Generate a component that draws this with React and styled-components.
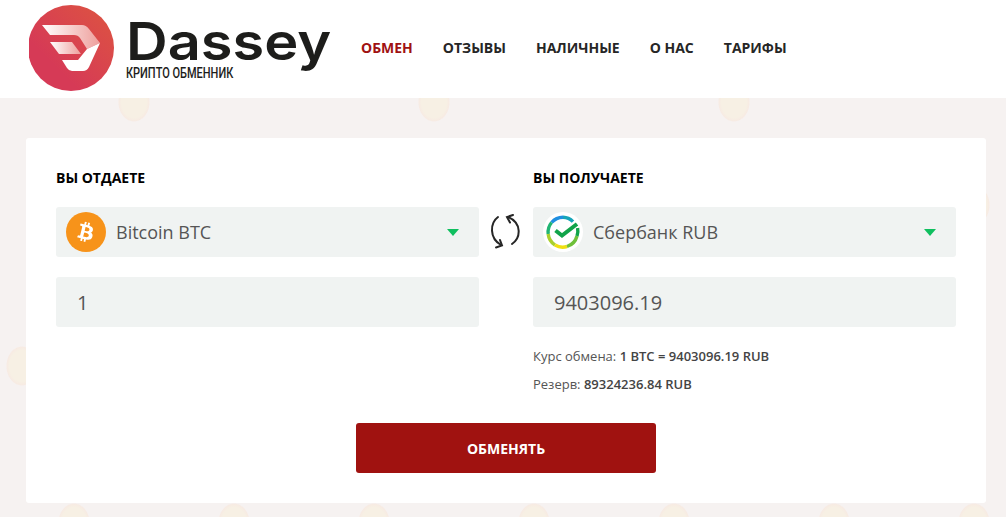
import React from 'react';
import styled, { createGlobalStyle } from 'styled-components';
import { FaBtc } from 'react-icons/fa';

const coin = (x, y) =>
  `radial-gradient(ellipse 16px 20px at ${x}px ${y}px, #f7f0e4 0, #f7f0e4 78%, #f7ebe3 94%, transparent 100%)`;

const coinLayers = [
  coin(134, 102),
  coin(22, 366),
  coin(74, 205),
  coin(74, 523),
  coin(234, 523),
].join(',');

const GlobalStyle = createGlobalStyle`
  html, body {
    margin: 0;
    padding: 0;
  }
  body {
    font-family: 'Open Sans', sans-serif;
    overflow: hidden;
  }
`;

const Page = styled.div`
  width: 1006px;
  height: 517px;
  overflow: hidden;
  background-color: #f6f2f1;
  background-image: ${coinLayers};
  background-size: 300px 600px;
  background-repeat: repeat-x;
`;

const Header = styled.header`
  height: 98px;
  background: #fff;
  display: flex;
  align-items: flex-start;
  padding-left: 29px;
  box-sizing: border-box;
`;

const Logo = styled.a`
  display: flex;
  align-items: flex-start;
  width: 332px;
  flex: none;
`;

const LogoMark = styled.svg`
  width: 86px;
  height: 86px;
  margin-top: 5px;
  flex: none;
`;

const LogoWords = styled.div`
  margin-left: 11px;
  display: flex;
  flex-direction: column;
`;

const LogoName = styled.span`
  font-family: Inter, sans-serif;
  font-size: 52px;
  font-weight: 600;
  line-height: 48px;
  margin-top: 18px;
  color: #1d1d1b;
  white-space: nowrap;
  transform-origin: left center;
  transform: scaleX(1.11);
`;

const LogoTag = styled.span`
  font-family: Roboto, sans-serif;
  font-size: 14px;
  font-weight: 500;
  line-height: 14px;
  color: #1d1d1b;
  white-space: nowrap;
  transform-origin: left center;
  transform: scaleX(0.785);
`;

const Nav = styled.nav`
  display: flex;
  gap: 30px;
  height: 95px;
  align-items: center;
`;

const NavLink = styled.a`
  font-size: 14px;
  font-weight: 700;
  color: ${p => (p.$active ? '#9f1212' : '#262626')};
`;

const Card = styled.main`
  margin: 40px 20px 0 26px;
  height: 365px;
  background: #fff;
  border-radius: 3px;
  padding: 32px 30px 0;
  box-sizing: border-box;
`;

const Columns = styled.div`
  display: grid;
  grid-template-columns: 423px 54px 423px;
`;

const Column = styled.div`
  display: flex;
  flex-direction: column;
`;

const Label = styled.div`
  font-size: 14px;
  font-weight: 700;
  line-height: 16px;
  color: #000;
  margin-bottom: 21px;
`;

const Select = styled.div`
  height: 50px;
  background: #f0f3f2;
  border-radius: 3px;
  display: flex;
  align-items: center;
  padding: 0 20px 0 10px;
  color: #555;
  font-size: 18px;
`;

const CoinBadge = styled.span`
  width: 40px;
  height: 40px;
  border-radius: 50%;
  background: ${p => p.$bg};
  display: flex;
  align-items: center;
  justify-content: center;
  margin-right: 10px;
  flex: none;
  color: #fff;
  font-size: 20px;
`;

const BtcGlyph = styled(FaBtc)`
  transform: rotate(14deg);
`;

const SelectText = styled.span`
  flex: 1;
`;

const Caret = styled.span`
  width: 0;
  height: 0;
  border-left: 6px solid transparent;
  border-right: 6px solid transparent;
  border-top: 7px solid #0fbf5f;
  margin-top: 1px;
`;

const Amount = styled.div`
  height: 50px;
  margin-top: 20px;
  background: #f0f3f2;
  border-radius: 3px;
  display: flex;
  align-items: center;
  padding: 0 21px;
  color: #555;
  font-size: 20px;
`;

const SwapCell = styled.div`
  height: 50px;
  margin-top: 37px;
  display: flex;
  align-items: center;
  justify-content: center;
`;

const Info = styled.div`
  font-size: 13px;
  line-height: 16px;
  color: #555;
  margin-top: ${p => p.$top}px;
`;

const Strong = styled.span`
  font-weight: 600;
  color: #444;
`;

const ButtonRow = styled.div`
  display: flex;
  justify-content: center;
`;

const Submit = styled.button`
  width: 300px;
  height: 50px;
  margin-top: 31px;
  border: none;
  border-radius: 3px;
  background: #a01210;
  color: #fff;
  font-family: 'Open Sans', sans-serif;
  font-size: 14px;
  font-weight: 700;
`;

const SberIcon = () => (
  <svg width="40" height="40" viewBox="0 0 40 40" fill="none">
    <g strokeWidth="3.4" strokeLinecap="butt">
      <path d="M30 9.6 A15 15 0 0 0 20 5.2" stroke="#16a5b8" />
      <path d="M20 5.2 A15 15 0 0 0 8.6 10.5" stroke="#1f8fe0" />
      <path d="M8.6 10.5 A15 15 0 0 0 5.2 22" stroke="#22b573" />
      <path d="M5.2 22 A15 15 0 0 0 12 33" stroke="#a9cf2e" />
      <path d="M12 33 A15 15 0 0 0 24 34.5" stroke="#f0e012" />
      <path d="M24 34.5 A15 15 0 0 0 34 24" stroke="#6fc03a" />
      <path d="M34 24 A15 15 0 0 0 34.6 16" stroke="#11a44a" />
    </g>
    <path d="M12.5 18.5 L19 23.5 L34 12" stroke="#11a44a" strokeWidth="4" />
  </svg>
);

const SwapIcon = () => (
  <svg width="32" height="36" viewBox="0 0 32 36" fill="none" stroke="#262626" strokeWidth="2" strokeLinecap="round">
    <path d="M8 3 C0 9 -1 24 11 31" />
    <path d="M6 33.5 L12 31.5 L10 26" />
    <path d="M22 30 C31 24 32 9 18 3" />
    <path d="M23 1 L17 3 L20 8.5" />
  </svg>
);

const LogoSvg = () => (
  <LogoMark viewBox="29 5 86 86">
    <defs>
      <linearGradient id="disc" x1="0" y1="1" x2="1" y2="0">
        <stop offset="0.3" stopColor="#d63a56" />
        <stop offset="1" stopColor="#dd5540" />
      </linearGradient>
      <linearGradient id="band" x1="0" y1="0" x2="1" y2="0">
        <stop offset="0" stopColor="#fff" />
        <stop offset="1" stopColor="#ee9f9c" />
      </linearGradient>
    </defs>
    <circle cx="71" cy="48" r="43" fill="url(#disc)" />
    <path d="M42 25 H82 Q86 25 89 29 L100 43 L87 49 L80 38 Q78 35 74 35 H50 Z" fill="url(#band)" />
    <path d="M50 42 H72 L81 54 H59 Z" fill="url(#band)" />
    <path d="M100 43 L89 67 Q87 71 83 71 H72 Q69 71 67 68 L62 60 H78 L87 49 Z" fill="#fff" />
  </LogoMark>
);

export default function App() {
  return (
    <Page>
      <GlobalStyle />
      <Header>
        <Logo>
          <LogoSvg />
          <LogoWords>
            <LogoName>Dassey</LogoName>
            <LogoTag>КРИПТО ОБМЕННИК</LogoTag>
          </LogoWords>
        </Logo>
        <Nav>
          <NavLink $active>ОБМЕН</NavLink>
          <NavLink>ОТЗЫВЫ</NavLink>
          <NavLink>НАЛИЧНЫЕ</NavLink>
          <NavLink>О НАС</NavLink>
          <NavLink>ТАРИФЫ</NavLink>
        </Nav>
      </Header>
      <Card>
        <Columns>
          <Column>
            <Label>ВЫ ОТДАЕТЕ</Label>
            <Select>
              <CoinBadge $bg="#f7931a"><BtcGlyph /></CoinBadge>
              <SelectText>Bitcoin BTC</SelectText>
              <Caret />
            </Select>
            <Amount>1</Amount>
          </Column>
          <SwapCell><SwapIcon /></SwapCell>
          <Column>
            <Label>ВЫ ПОЛУЧАЕТЕ</Label>
            <Select>
              <CoinBadge $bg="#fff"><SberIcon /></CoinBadge>
              <SelectText>Сбербанк RUB</SelectText>
              <Caret />
            </Select>
            <Amount>9403096.19</Amount>
            <Info $top={21}>Курс обмена: <Strong>1 BTC = 9403096.19 RUB</Strong></Info>
            <Info $top={12}>Резерв: <Strong>89324236.84 RUB</Strong></Info>
          </Column>
        </Columns>
        <ButtonRow>
          <Submit>ОБМЕНЯТЬ</Submit>
        </ButtonRow>
      </Card>
    </Page>
  );
}
